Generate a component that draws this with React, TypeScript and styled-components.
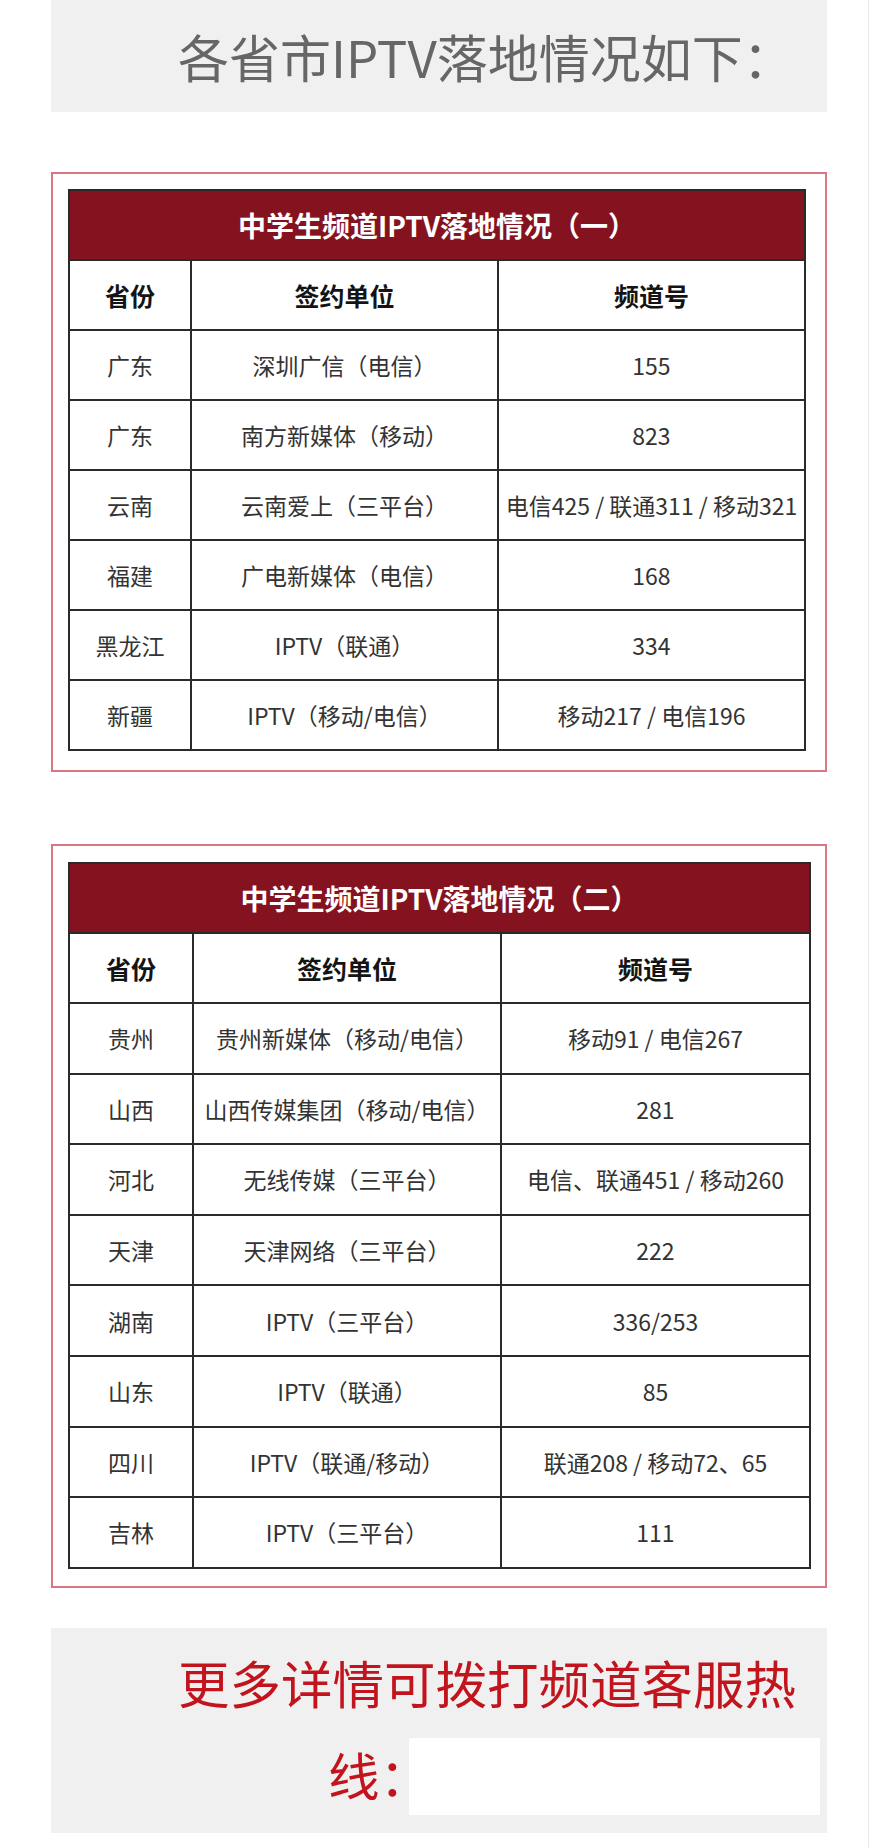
import React from "react";
import styled, { createGlobalStyle } from "styled-components";

const GlobalStyle = createGlobalStyle`
  html, body {
    margin: 0;
    padding: 0;
    background: #ffffff;
  }
  body {
    font-family: "Noto Sans CJK SC", "Noto Sans", sans-serif;
  }
  * { box-sizing: border-box; }
`;

const Page = styled.div`
  width: 869px;
  min-height: 1848px;
  padding: 0 0 16px 51px;
  border-right: 1px solid #e8e8e8;
  display: flex;
  flex-direction: column;
`;

const TitleBox = styled.div`
  width: 776px;
  height: 112px;
  background: #f0f0f0;
  display: flex;
  align-items: center;
  padding-left: 127px;
`;

const TitleText = styled.h1`
  margin: 0;
  font-size: 51px;
  font-weight: 400;
  line-height: 1;
  color: #666666;
  white-space: nowrap;
`;

const Frame = styled.section<{ $top: number; $pt: number; $pb: number }>`
  width: 776px;
  margin-top: ${(p) => p.$top}px;
  border: 2px solid #d9787e;
  padding: ${(p) => p.$pt}px 0 ${(p) => p.$pb}px 15px;
`;

const Table = styled.table<{ $width: number }>`
  width: ${(p) => p.$width}px;
  border-collapse: collapse;
  table-layout: fixed;
  border: 2px solid #2a2a2a;
`;

const Row = styled.tr<{ $h: number }>`
  height: ${(p) => p.$h}px;
`;

const TitleCell = styled.th`
  background: #85131f;
  color: #ffffff;
  font-size: 28px;
  font-weight: 700;
  text-align: center;
  padding: 0;
  border: 2px solid #2a2a2a;
`;

const HeadCell = styled.th`
  color: #141414;
  font-size: 25px;
  font-weight: 700;
  text-align: center;
  padding: 0;
  border: 2px solid #2a2a2a;
`;

const Cell = styled.td`
  color: #333333;
  font-size: 23px;
  font-weight: 400;
  text-align: center;
  padding: 0;
  border: 2px solid #2a2a2a;
  white-space: nowrap;
`;

const Footer = styled.div`
  width: 776px;
  height: 205px;
  margin-top: 40px;
  background: #f0f0f0;
  padding-top: 8px;
  display: flex;
  flex-direction: column;
`;

const FooterLine = styled.div<{ $indent: number }>`
  height: 92px;
  display: flex;
  align-items: center;
  padding-left: ${(p) => p.$indent}px;
  color: #c2141d;
  font-size: 51.5px;
  font-weight: 400;
  white-space: nowrap;
`;

const Redacted = styled.span`
  display: block;
  width: 411px;
  height: 77px;
  margin-left: -22px;
  margin-top: 6px;
  background: #ffffff;
`;

type Entry = [string, string, string];

const table1: Entry[] = [
  ["广东", "深圳广信（电信）", "155"],
  ["广东", "南方新媒体（移动）", "823"],
  ["云南", "云南爱上（三平台）", "电信425 / 联通311 / 移动321"],
  ["福建", "广电新媒体（电信）", "168"],
  ["黑龙江", "IPTV（联通）", "334"],
  ["新疆", "IPTV（移动/电信）", "移动217 / 电信196"],
];

const table2: Entry[] = [
  ["贵州", "贵州新媒体（移动/电信）", "移动91 / 电信267"],
  ["山西", "山西传媒集团（移动/电信）", "281"],
  ["河北", "无线传媒（三平台）", "电信、联通451 / 移动260"],
  ["天津", "天津网络（三平台）", "222"],
  ["湖南", "IPTV（三平台）", "336/253"],
  ["山东", "IPTV（联通）", "85"],
  ["四川", "IPTV（联通/移动）", "联通208 / 移动72、65"],
  ["吉林", "IPTV（三平台）", "111"],
];

type SheetProps = {
  title: string;
  rows: Entry[];
  widths: [number, number, number];
  headH: number;
  colH: number;
  rowH: number;
};

function Sheet({ title, rows, widths, headH, colH, rowH }: SheetProps) {
  const total = widths[0] + widths[1] + widths[2];
  return (
    <Table $width={total}>
      <colgroup>
        {widths.map((w, i) => (
          <col key={i} style={{ width: w }} />
        ))}
      </colgroup>
      <thead>
        <Row $h={headH}>
          <TitleCell colSpan={3}>{title}</TitleCell>
        </Row>
        <Row $h={colH}>
          <HeadCell>省份</HeadCell>
          <HeadCell>签约单位</HeadCell>
          <HeadCell>频道号</HeadCell>
        </Row>
      </thead>
      <tbody>
        {rows.map((r, i) => (
          <Row key={i} $h={rowH}>
            <Cell>{r[0]}</Cell>
            <Cell>{r[1]}</Cell>
            <Cell>{r[2]}</Cell>
          </Row>
        ))}
      </tbody>
    </Table>
  );
}

export default function App() {
  return (
    <>
      <GlobalStyle />
      <Page>
        <TitleBox>
          <TitleText>各省市IPTV落地情况如下：</TitleText>
        </TitleBox>

        <Frame $top={60} $pt={15} $pb={19}>
          <Sheet
            title="中学生频道IPTV落地情况（一）"
            rows={table1}
            widths={[122, 307, 307]}
            headH={70}
            colH={70}
            rowH={70}
          />
        </Frame>

        <Frame $top={72} $pt={16} $pb={17}>
          <Sheet
            title="中学生频道IPTV落地情况（二）"
            rows={table2}
            widths={[124, 308, 309]}
            headH={70}
            colH={70}
            rowH={70.6}
          />
        </Frame>

        <Footer>
          <FooterLine $indent={127}>更多详情可拨打频道客服热</FooterLine>
          <FooterLine $indent={277}>
            线：
            <Redacted />
          </FooterLine>
        </Footer>
      </Page>
    </>
  );
}
